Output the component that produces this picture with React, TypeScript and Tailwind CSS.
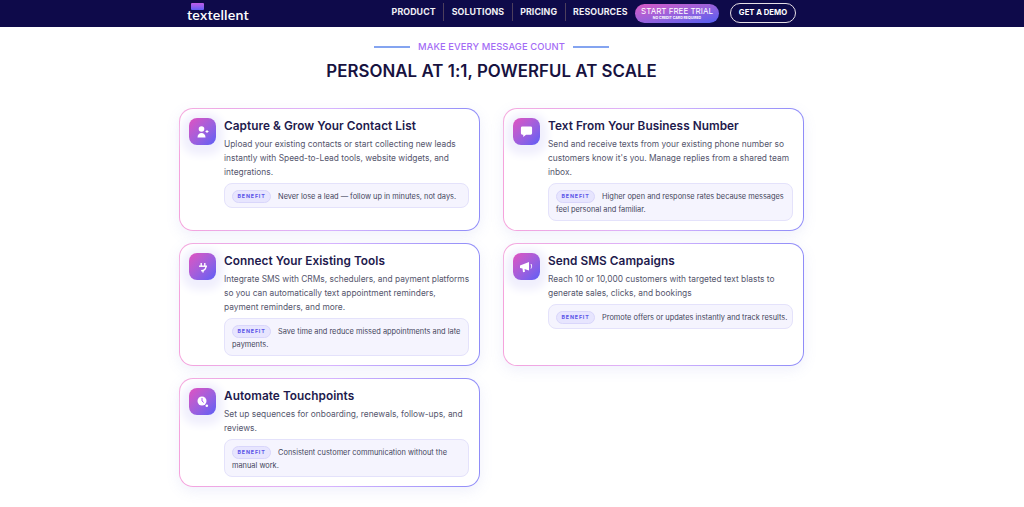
import React from "react";

const cards = [
  { t: "Capture & Grow Your Contact List", d: ["Upload your existing contacts or start collecting new leads", "instantly with Speed-to-Lead tools, website widgets, and", "integrations."], b: "Never lose a lead — follow up in minutes, not days.", i: "user" },
  { t: "Text From Your Business Number", d: ["Send and receive texts from your existing phone number so", "customers know it's you. Manage replies from a shared team", "inbox."], b: "Higher open and response rates because messages feel personal and familiar.", i: "chat" },
  { t: "Connect Your Existing Tools", d: ["Integrate SMS with CRMs, schedulers, and payment platforms", "so you can automatically text appointment reminders,", "payment reminders, and more."], b: "Save time and reduce missed appointments and late payments.", i: "plug" },
  { t: "Send SMS Campaigns", d: ["Reach 10 or 10,000 customers with targeted text blasts to", "generate sales, clicks, and bookings"], b: "Promote offers or updates instantly and track results.", i: "mega" },
  { t: "Automate Touchpoints", d: ["Set up sequences for onboarding, renewals, follow-ups, and", "reviews."], b: "Consistent customer communication without the manual work.", i: "clock" },
];

function Icon({ k }: { k: string }) {
  if (k === "user")
    return (
      <svg width="14" height="14" viewBox="0 0 14 14" fill="white">
        <circle cx="5.500" cy="4" r="2.800" />
        <path d="M1.500 12.500c0-3 1.800-4.500 4-4.500s4 1.500 4 4.500z" />
        <path d="M11 5v3M9.500 6.500h3" stroke="white" strokeWidth="1" />
      </svg>
    );
  if (k === "chat")
    return (
      <svg width="13" height="13" viewBox="0 0 14 14" fill="white">
        <path d="M2.500 1.500h9A1.500 1.500 0 0 1 13 3v6A1.500 1.500 0 0 1 11.500 10.500H6.500L3.500 13v-2.500h-1A1.500 1.500 0 0 1 1 9V3a1.500 1.500 0 0 1 1.500-1.500z" />
      </svg>
    );
  if (k === "plug")
    return (
      <svg width="14" height="14" viewBox="0 0 14 14" fill="none" stroke="white" strokeWidth="1.400">
        <path d="M3 6.200h8" />
        <path d="M5.200 3v3.200M8.800 3v3.200" />
        <path d="M10 6.200c0 2.800-1.600 4.200-4.800 4.600" />
        <path d="M7 10v2.500" />
      </svg>
    );
  if (k === "mega")
    return (
      <svg width="16" height="14" viewBox="0 0 16 14" fill="white">
        <path d="M1 5.500l9-3.500v8.500L5.500 9l.5 2.800-2 .4L3.500 8.500 1 8z" />
        <path d="M12 4c.8 1.500.8 3 0 4.500" stroke="white" strokeWidth="1" fill="none" />
      </svg>
    );
  return (
    <svg width="14" height="14" viewBox="0 0 14 14" fill="white">
      <circle cx="6" cy="6" r="4.500" />
      <path d="M6 3v3l1.800 1.500" stroke="#a855f7" strokeWidth="1" fill="none" />
      <circle cx="10.800" cy="10.800" r="1.300" />
    </svg>
  );
}

function Card({ c }: { c: (typeof cards)[number] }) {
  return (
    <div className="rounded-[14px] bg-gradient-to-r from-[#f5a3dc] via-[#d8b4fe] to-[#8f8cf8] p-px shadow-[0_4px_14px_rgba(120,130,220,0.12)]">
      <div className="flex h-full gap-[8px] rounded-[13px] bg-white pb-[9px] pl-[9px] pr-[10px] pt-[9px]">
        <div className="h-[27px] w-[27px] shrink-0">
          <div className="flex h-[27px] w-[27px] items-center justify-center rounded-[8px] bg-gradient-to-br from-[#e14fc0] to-[#5b5cf6] shadow-[0_3px_9px_7px_#f0effd]">
            <Icon k={c.i} />
          </div>
        </div>
        <div className="flex min-w-0 flex-1 flex-col">
          <div className="text-[11.800px] font-semibold leading-[16px] tracking-[0.05px] text-[#1e1a4d]">{c.t}</div>
          <div className="mt-[3px] text-[8.400px] leading-[14px] text-[#55566d]">
            {c.d.map((l) => (
              <div key={l} className="whitespace-nowrap">{l}</div>
            ))}
          </div>
          <div className="mt-[4px] rounded-[8px] border border-[#e4e2fb] bg-[#f5f4fe] pb-[4.500px] pl-[7px] pr-[4px] pt-[5.500px] text-[7.400px] leading-[13px] text-[#44455c]">
            <span className="mr-[7px] inline-block h-[13px] rounded-full border border-[#d9d6fb] bg-[#e7e5fe] px-[4.500px] align-top text-[5.300px] font-bold leading-[11px] tracking-[0.85px] text-[#5b54e8]">BENEFIT</span>
            {c.b}
          </div>
        </div>
      </div>
    </div>
  );
}

const nav = ["PRODUCT", "SOLUTIONS", "PRICING", "RESOURCES"];

export default function App() {
  return (
    <div className="h-[507px] w-[1024px] overflow-hidden bg-white font-['Inter',sans-serif]">
      <header className="flex h-[27px] items-center bg-[#0e0a4a] pb-[1px] pl-[187px] pr-[228px]">
        <div className="relative flex h-full w-[63px] shrink-0 flex-col items-start justify-end pb-[4px]">
          <div className="absolute left-[4px] top-[3px] h-[7px] w-[13px] rounded-[1px] bg-gradient-to-b from-[#c05ae8] to-[#5b5cf6]" />
          <span className="font-['Lato',sans-serif] text-[14.200px] font-semibold leading-[15px] tracking-[0.2px] text-white">textellent</span>
        </div>
        <nav className="ml-auto flex items-center pb-[3px]">
          {nav.map((n, i) => (
            <span key={n} className={`flex h-[18px] items-center px-[7.500px] text-[8.800px] font-bold tracking-[0.1px] text-[#f1f1f6] ${i < 3 ? "border-r border-[#4d3f5c]" : ""}`}>{n}</span>
          ))}
        </nav>
        <div className="flex h-[19px] w-[84px] flex-col items-center justify-center rounded-full bg-gradient-to-br from-[#d957c5] to-[#4f5cf0] text-white">
          <span className="text-[8px] leading-[9px]">START FREE TRIAL</span>
          <span className="text-[3.500px] font-bold leading-[4px]">NO CREDIT CARD REQUIRED</span>
        </div>
        <div className="ml-[11px] flex h-[20px] w-[66px] items-center justify-center rounded-full border border-[#e6dfe6] text-[7.700px] font-bold text-white">GET A DEMO</div>
      </header>
      <main className="flex w-[983px] flex-col items-center">
        <div className="mt-[13px] flex items-center gap-[8px]">
          <span className="h-[1.500px] w-[36px] bg-[#84a4f0]" />
          <span className="text-[9.400px] font-medium leading-[14px] tracking-[0.1px] text-[#a36bf5]">MAKE EVERY MESSAGE COUNT</span>
          <span className="h-[1.500px] w-[36px] bg-[#84a4f0]" />
        </div>
        <h1 className="mt-[7px] text-[16.850px] font-semibold leading-[20px] tracking-[0.05px] text-[#17123f]">PERSONAL AT 1:1, POWERFUL AT SCALE</h1>
        <div className="mt-[27px] grid w-[625px] grid-cols-2 gap-x-[23px] gap-y-[12px]">
          {cards.map((c) => (
            <Card key={c.t} c={c} />
          ))}
        </div>
      </main>
    </div>
  );
}
